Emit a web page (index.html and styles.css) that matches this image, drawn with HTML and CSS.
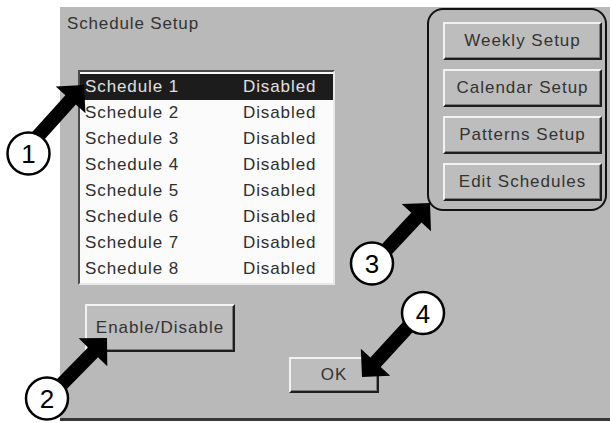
FILE: index.html
```html
<!DOCTYPE html>
<html>
<head>
<meta charset="utf-8">
<title>Schedule Setup</title>
<link rel="stylesheet" href="styles.css">
</head>
<body>
<div class="panel">
  <div class="left">
    <div class="title">Schedule Setup</div>
    <div class="listbox">
      <div class="row sel"><span class="name">Schedule 1</span><span>Disabled</span></div>
      <div class="row"><span class="name">Schedule 2</span><span>Disabled</span></div>
      <div class="row"><span class="name">Schedule 3</span><span>Disabled</span></div>
      <div class="row"><span class="name">Schedule 4</span><span>Disabled</span></div>
      <div class="row"><span class="name">Schedule 5</span><span>Disabled</span></div>
      <div class="row"><span class="name">Schedule 6</span><span>Disabled</span></div>
      <div class="row"><span class="name">Schedule 7</span><span>Disabled</span></div>
      <div class="row"><span class="name">Schedule 8</span><span>Disabled</span></div>
    </div>
    <button class="btn enable">Enable/Disable</button>
    <button class="btn ok">OK</button>
  </div>
  <div class="group">
    <button class="btn side">Weekly Setup</button>
    <button class="btn side">Calendar Setup</button>
    <button class="btn side">Patterns Setup</button>
    <button class="btn side">Edit Schedules</button>
  </div>
</div>
<svg class="notes" width="610" height="423" viewBox="0 0 610 423">
  <g class="arrow" transform="translate(84 85) rotate(-48)"><polygon points="0,0 -20,-20 -20,-7 -78,-7 -78,7 -20,7 -20,20"/></g>
  <g class="arrow" transform="translate(107 338) rotate(-45.6)"><polygon points="0,0 -20,-20 -20,-7 -74,-7 -74,7 -20,7 -20,20"/></g>
  <g class="arrow" transform="translate(430 203) rotate(-47)"><polygon points="0,0 -20,-20 -20,-7 -73,-7 -73,7 -20,7 -20,20"/></g>
  <g class="arrow" transform="translate(362 377) rotate(132.6)"><polygon points="0,0 -20,-20 -20,-7 -78,-7 -78,7 -20,7 -20,20"/></g>
  <circle class="bubble" cx="28.5" cy="153.5" r="21"/>
  <text class="num" x="28.5" y="163">1</text>
  <circle class="bubble" cx="47" cy="398.5" r="21"/>
  <text class="num" x="47" y="408">2</text>
  <circle class="bubble" cx="372" cy="263.5" r="21"/>
  <text class="num" x="372" y="273">3</text>
  <circle class="bubble" cx="423" cy="313" r="21"/>
  <text class="num" x="423" y="322.5">4</text>
</svg>
</body>
</html>
```
FILE: styles.css
```css
html, body {
  margin: 0;
  background: #ffffff;
}
body {
  width: 610px;
  height: 423px;
  position: relative;
  overflow: hidden;
  font-family: "Liberation Sans", Arial, sans-serif;
}
.panel {
  margin: 7px 0 0 60px;
  width: 550px;
  height: 414px;
  box-sizing: border-box;
  background: #b9b9b9;
  border-bottom: 3px solid #383838;
  display: flex;
}
.left {
  width: 367px;
  display: flex;
  flex-direction: column;
  align-items: flex-start;
}
.title {
  margin: 7px 0 0 7px;
  line-height: 20px;
  font-size: 17px;
  letter-spacing: 0.85px;
  color: #333333;
}
.listbox {
  margin: 36px 0 0 18px;
  width: 257px;
  height: 215px;
  box-sizing: border-box;
  background: #fbfbfb;
  border: 2px solid;
  border-color: #4a4a4a #e8e8e8 #e8e8e8 #4a4a4a;
  padding-top: 2px;
}
.row {
  height: 26px;
  display: flex;
  align-items: center;
  padding-left: 5px;
  font-size: 17px;
  letter-spacing: 0.9px;
  color: #2e2e2e;
}
.row .name {
  width: 158px;
}
.row.sel {
  background: #1c1c1c;
  color: #e0e0e0;
}
.btn {
  font-family: inherit;
  font-size: 17px;
  letter-spacing: 1px;
  color: #333333;
  background: #bdbdbd;
  border: 2px solid;
  border-color: #f2f2f2 #1e1e1e #1e1e1e #f2f2f2;
  box-shadow: inset -1px -1px 0 #7a7a7a;
  padding: 0;
  box-sizing: border-box;
}
.enable {
  margin: 19px 0 0 25px;
  width: 150px;
  height: 48px;
}
.ok {
  margin: 5px 0 0 229px;
  width: 90px;
  height: 36px;
}
.group {
  margin-top: 1px;
  width: 180px;
  height: 203px;
  box-sizing: border-box;
  border: 2px solid #111111;
  border-radius: 16px;
  padding: 12px 0 0 14px;
  display: flex;
  flex-direction: column;
  gap: 9px;
}
.side {
  width: 159px;
  height: 38px;
}
.notes {
  position: absolute;
  left: 0;
  top: 0;
  pointer-events: none;
}
.arrow polygon {
  fill: #000000;
}
.bubble {
  fill: #ffffff;
  stroke: #000000;
  stroke-width: 2.5;
}
.num {
  font-family: "Liberation Sans", Arial, sans-serif;
  font-size: 26px;
  text-anchor: middle;
  fill: #000000;
}
```
